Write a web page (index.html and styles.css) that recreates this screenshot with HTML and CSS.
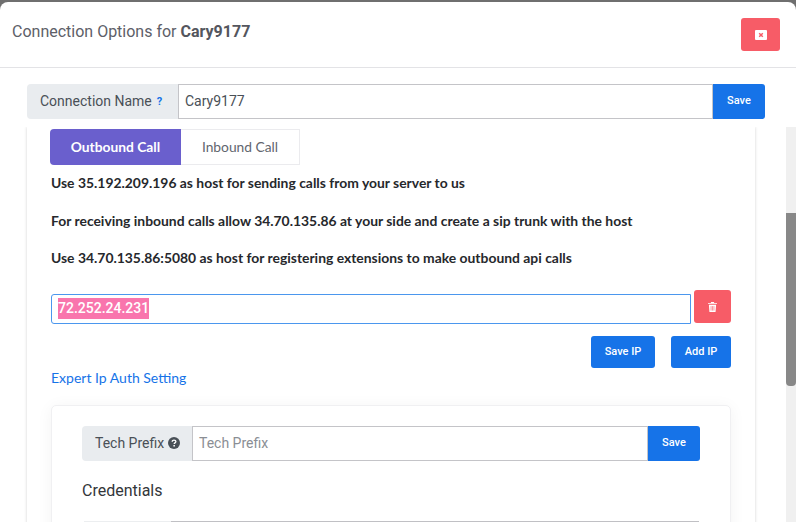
FILE: index.html
```html
<!DOCTYPE html>
<html lang="en">
<head>
<meta charset="utf-8">
<title>Connection Options</title>
<link rel="stylesheet" href="styles.css">
</head>
<body>
<div class="modal">
  <header class="modal-header">
    <h1 class="modal-title">Connection Options for <strong>Cary9177</strong></h1>
    <button class="btn btn-danger btn-close" aria-label="Close">
      <svg class="icon-close" viewBox="0 0 12 10" width="12" height="10"><rect width="12" height="10" rx="1" fill="#fff"/><path d="M4.200 3.200l3.600 3.600M7.800 3.200L4.200 6.800" stroke="#f75c67" stroke-width="1.500"/></svg>
    </button>
  </header>
  <div class="name-row">
    <div class="group">
      <span class="addon addon-name">Connection Name <span class="help">?</span></span>
      <div class="field field-name">Cary9177</div>
      <button class="btn btn-primary btn-append">Save</button>
    </div>
  </div>
  <div class="scroll-area">
    <main class="content">
      <section class="card">
        <nav class="tabs">
          <span class="tab tab-active">Outbound Call</span>
          <span class="tab">Inbound Call</span>
        </nav>
        <p class="note">Use 35.192.209.196 as host for sending calls from your server to us</p>
        <p class="note">For receiving inbound calls allow 34.70.135.86 at your side and create a sip trunk with the host</p>
        <p class="note">Use 34.70.135.86:5080 as host for registering extensions to make outbound api calls</p>
        <div class="ip-row">
          <div class="field field-ip"><span class="selected">72.252.24.231</span></div>
          <button class="btn btn-danger btn-trash" aria-label="Delete">
            <svg viewBox="0 0 10 11" width="9" height="10"><path fill="#fff" d="M3.500 0h3l.5 1h3v1H0V1h3zM1 3h8l-.6 8H1.600z"/><path d="M3.400 4.500v5M5 4.500v5M6.600 4.500v5" stroke="#f75c67" stroke-width=".7"/></svg>
          </button>
        </div>
        <div class="ip-actions">
          <button class="btn btn-primary btn-ip">Save IP</button>
          <button class="btn btn-primary btn-ip btn-add">Add IP</button>
        </div>
        <a class="expert-link" href="#">Expert Ip Auth Setting</a>
        <section class="inner-card">
          <div class="group">
            <span class="addon addon-prefix">Tech Prefix
              <svg class="icon-q" viewBox="0 0 12 12" width="12" height="12"><circle cx="6" cy="6" r="6" fill="#495057"/><path d="M4.200 4.700c0-1 .8-1.600 1.800-1.600s1.900.6 1.900 1.500c0 1.300-1.700 1.200-1.700 2.300" fill="none" stroke="#fff" stroke-width="1.300"/><rect x="5.400" y="8" width="1.500" height="1.500" fill="#fff"/></svg>
            </span>
            <div class="field field-prefix">Tech Prefix</div>
            <button class="btn btn-primary btn-append">Save</button>
          </div>
          <h2 class="credentials">Credentials</h2>
          <div class="next-row"><span class="next-addon"></span><span class="next-field"></span></div>
        </section>
      </section>
    </main>
    <div class="scrollbar"><div class="thumb"></div></div>
  </div>
</div>
</body>
</html>
```
FILE: styles.css
```css
* { box-sizing: border-box; }
html, body { margin: 0; height: 522px; overflow: hidden; }
body { background: #6f6f6f; padding-top: 2px; font-family: Roboto, sans-serif; }
.modal { background: #fff; height: 520px; border-radius: 8px 8px 0 0; overflow: hidden; display: flex; flex-direction: column; }
.modal-header { height: 66px; flex: none; border-bottom: 1px solid #e3e3e6; display: flex; justify-content: space-between; align-items: flex-start; padding: 16px 16px 0 12px; }
.modal-title { margin: 3px 0 0; font-size: 16px; font-weight: 400; line-height: 21px; color: #5d6068; }
.modal-title strong { font-weight: 700; color: #54565e; }
.btn { border: 0; padding: 0; color: #fff; font-family: Roboto, sans-serif; font-weight: 500; font-size: 11px; border-radius: 3px; display: flex; align-items: center; justify-content: center; }
.btn-danger { background: #f75c67; }
.btn-primary { background: #1673e8; }
.btn-close { width: 39px; height: 33px; }
.name-row { height: 59px; flex: none; padding: 16px 31px 0 27px; }
.group { display: flex; height: 35px; }
.addon { background: #e9ecef; color: #495057; font-size: 14px; display: flex; align-items: center; white-space: nowrap; border-radius: 4px 0 0 4px; padding-bottom: 1px; }
.addon-name { width: 151px; padding-left: 13px; }
.help { color: #1673e8; font-size: 11px; font-weight: 700; margin-left: 5px; }
.field { border: 1px solid #c4c4c8; background: #fff; font-size: 14px; color: #495057; display: flex; align-items: center; }
.field-name { flex: 1; padding: 0 0 1px 6px; }
.btn-append { width: 52px; border-radius: 0 3px 3px 0; padding-bottom: 2px; }
.scroll-area { flex: 1; min-height: 0; display: flex; overflow: hidden; }
.content { flex: 1; min-width: 0; padding: 0 31px 0 27px; overflow: hidden; }
.card { width: 728px; height: 500px; padding: 2px 24px 0; background: #fff; box-shadow: 0 0 3px rgba(0,0,0,.18); }
.tabs { display: flex; height: 36px; margin-left: -1px; margin-bottom: 7px; }
.tab { width: 119px; border: 1px solid #ebebee; border-left: 0; display: flex; align-items: center; justify-content: center; font-family: Lato, sans-serif; font-size: 13.800px; color: #62666e; padding-bottom: 2px; }
.tab-active { width: 131px; background: #6a5fcd; border: 0; border-radius: 4px 0 0 4px; color: #fff; font-weight: 700; }
.note { margin: 0 0 16.500px; font-family: Lato, sans-serif; font-size: 13.900px; font-weight: 700; line-height: 21px; color: #26282c; white-space: nowrap; }
.ip-row { display: flex; align-items: flex-start; margin-top: 22px; height: 46px; }
.field-ip { width: 640px; height: 30px; margin-top: 4px; border-color: #4b97ee; border-radius: 3px 0 0 3px; padding: 0 0 1px 6px; }
.selected { background: #f975ad; color: #fff; line-height: 21px; font-weight: 500; }
.btn-trash { width: 37px; height: 33px; margin-left: 3px; }
.ip-actions { display: flex; justify-content: flex-end; gap: 16px; }
.btn-ip { width: 64px; height: 32px; padding-bottom: 1px; }
.btn-add { width: 60px; }
.expert-link { display: block; margin: 1px 0 0; font-family: Lato, sans-serif; font-size: 14px; line-height: 17px; color: #1673e8; text-decoration: none; }
.inner-card { width: 680px; height: 300px; margin: 19px 0 0; padding: 20px 30px 0; border: 1px solid #f0f0f2; border-radius: 5px; box-shadow: 0 2px 16px rgba(0,0,0,.05); }
.addon-prefix { width: 110px; padding-left: 13px; gap: 4px; }
.field-prefix { flex: 1; padding: 0 0 1px 6px; color: #8a8e94; }
.credentials { margin: 20px 0 0; font-size: 16px; font-weight: 400; line-height: 19px; color: #33363a; }
.next-row { display: flex; height: 1px; margin: 21px 1px 0 2px; }
.next-addon { width: 87px; background: #eceef0; }
.next-field { flex: 1; background: #c0c0c4; }
.scrollbar { width: 10px; flex: none; background: #f0f0f0; }
.thumb { height: 173px; margin-top: 86px; background: #888; border-radius: 0 0 4px 4px; }
```
